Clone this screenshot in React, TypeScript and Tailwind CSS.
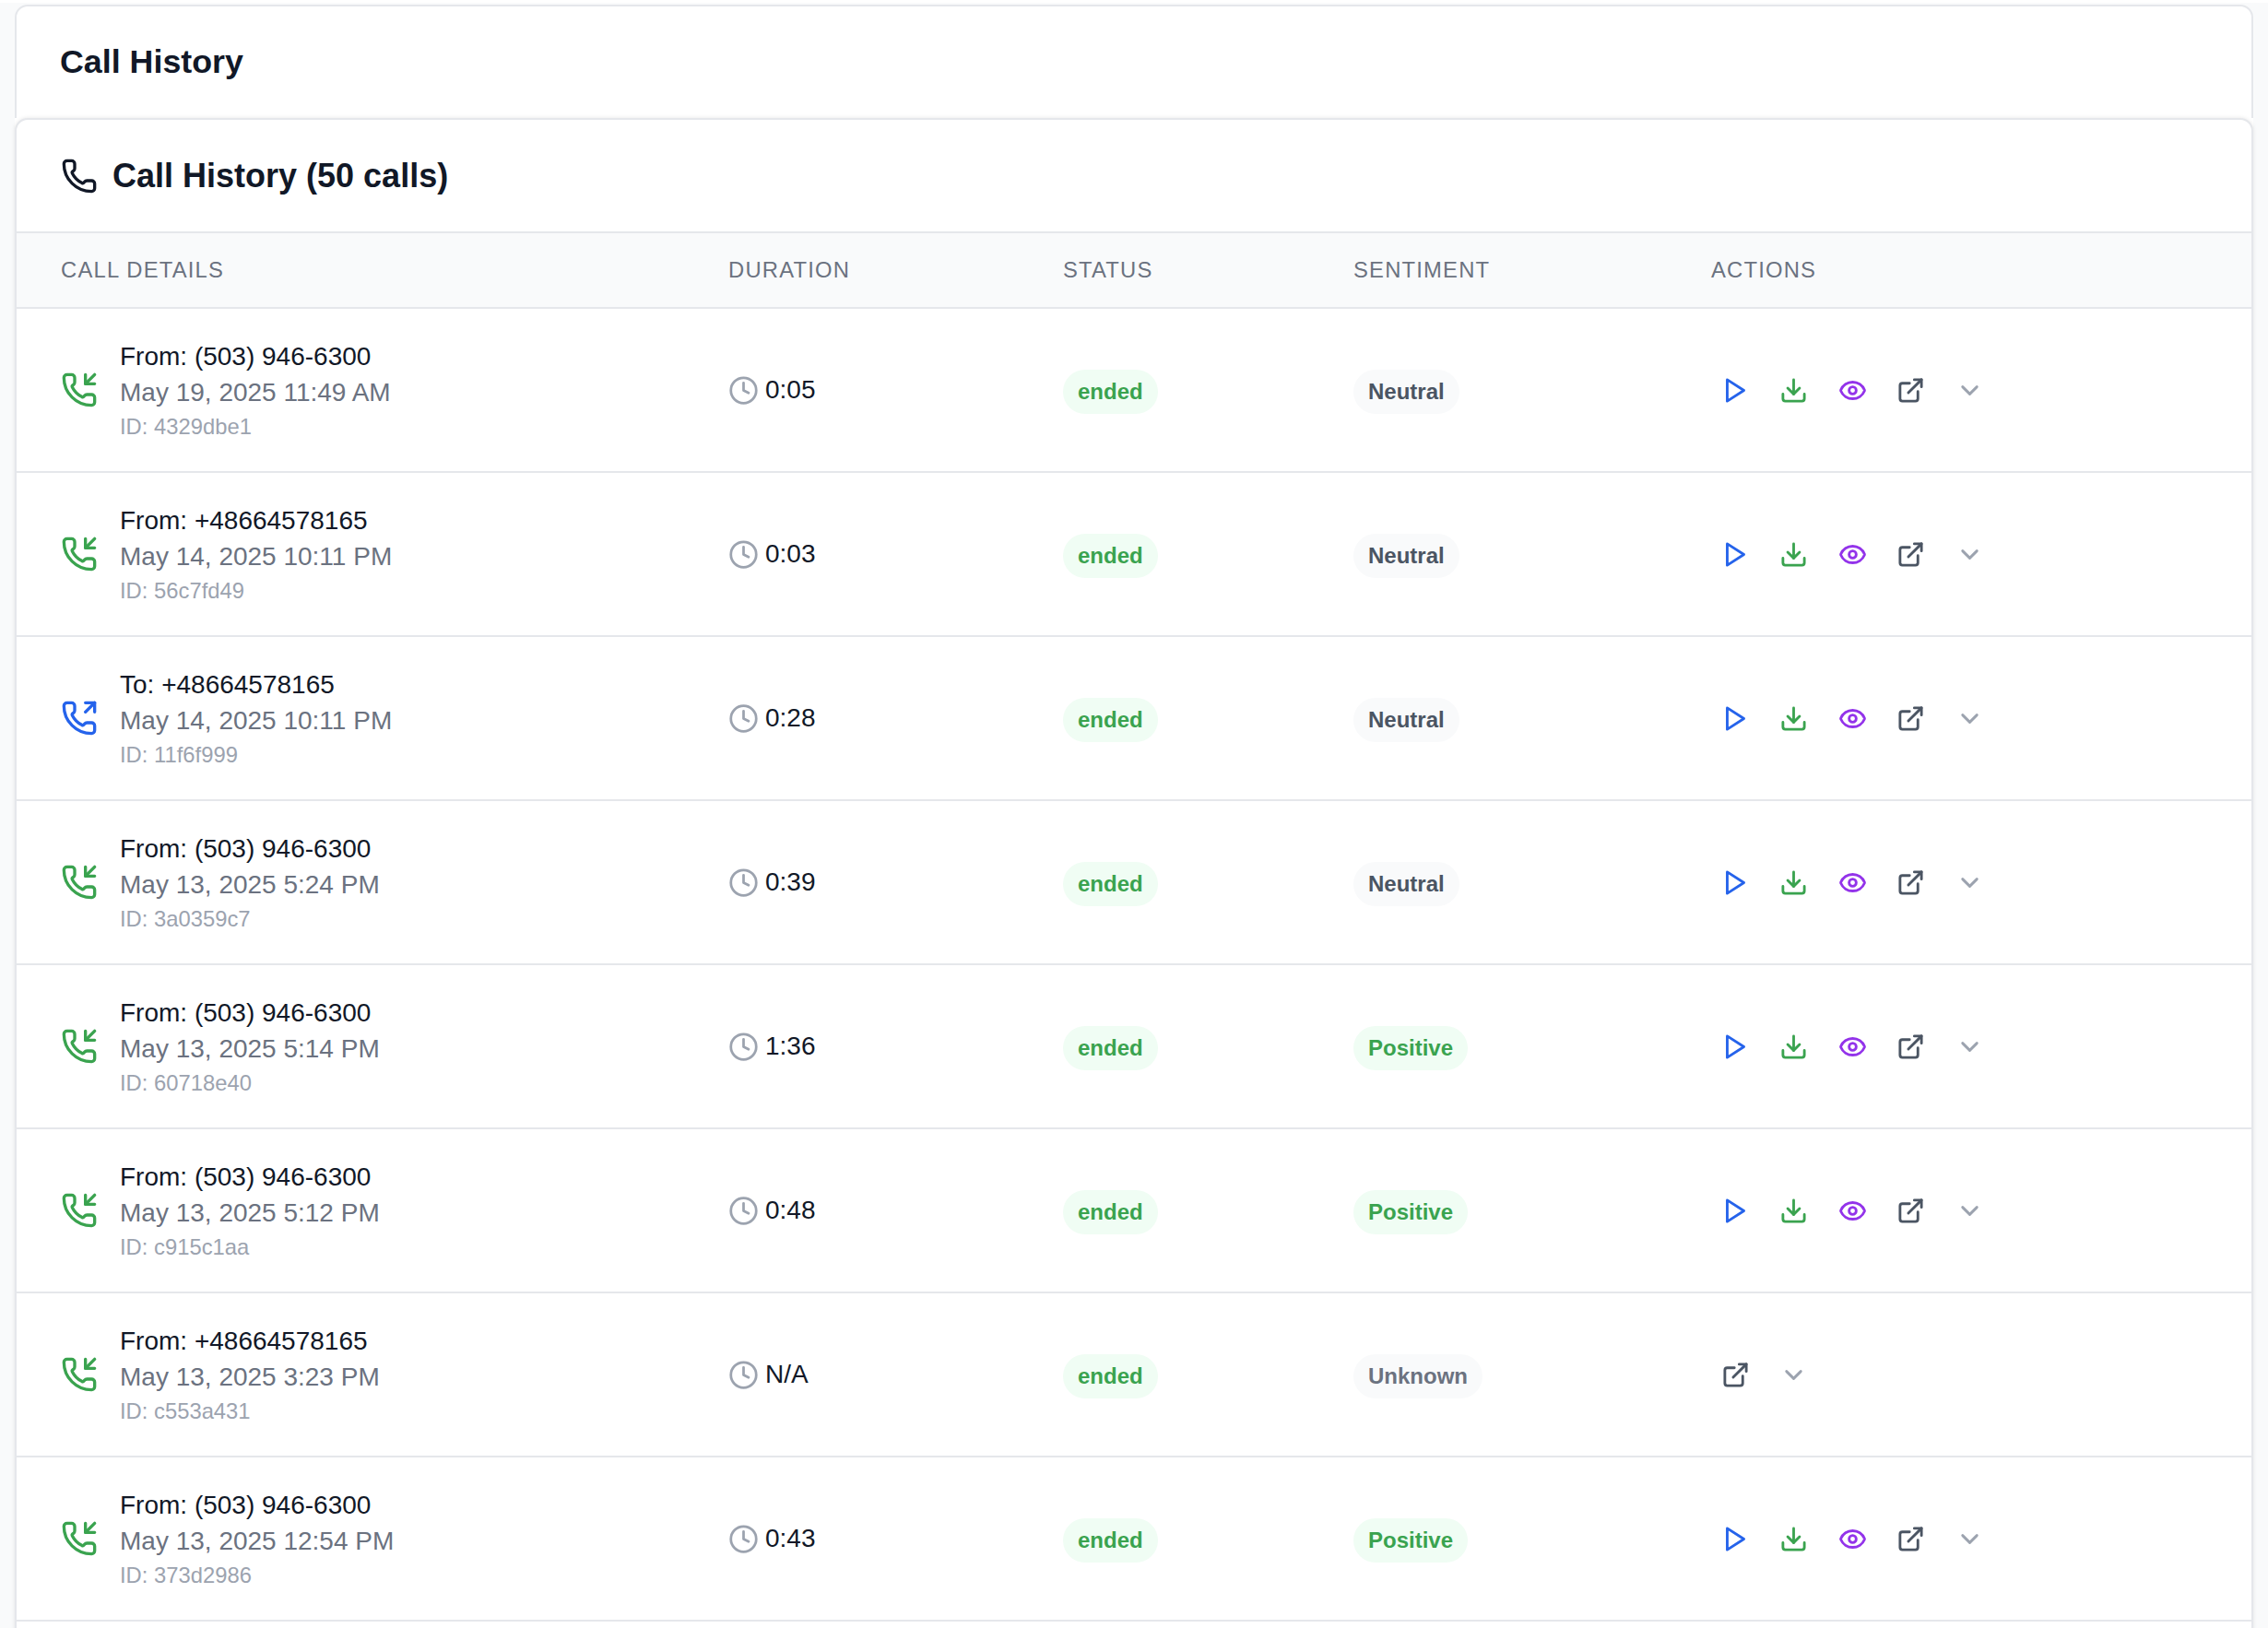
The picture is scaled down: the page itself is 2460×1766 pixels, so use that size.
import { ChevronDown, Clock, Download, ExternalLink, Eye, Phone, PhoneIncoming, PhoneOutgoing } from "lucide-react";

const calls = [
  { dir: "in", number: "(503) 946-6300", date: "May 19, 2025 11:49 AM", id: "4329dbe1", duration: "0:05", sentiment: "Neutral" },
  { dir: "in", number: "+48664578165", date: "May 14, 2025 10:11 PM", id: "56c7fd49", duration: "0:03", sentiment: "Neutral" },
  { dir: "out", number: "+48664578165", date: "May 14, 2025 10:11 PM", id: "11f6f999", duration: "0:28", sentiment: "Neutral" },
  { dir: "in", number: "(503) 946-6300", date: "May 13, 2025 5:24 PM", id: "3a0359c7", duration: "0:39", sentiment: "Neutral" },
  { dir: "in", number: "(503) 946-6300", date: "May 13, 2025 5:14 PM", id: "60718e40", duration: "1:36", sentiment: "Positive" },
  { dir: "in", number: "(503) 946-6300", date: "May 13, 2025 5:12 PM", id: "c915c1aa", duration: "0:48", sentiment: "Positive" },
  { dir: "in", number: "+48664578165", date: "May 13, 2025 3:23 PM", id: "c553a431", duration: "N/A", sentiment: "Unknown" },
  { dir: "in", number: "(503) 946-6300", date: "May 13, 2025 12:54 PM", id: "373d2986", duration: "0:43", sentiment: "Positive" },
];

const sentimentStyles: Record<string, string> = {
  Neutral: "bg-[#f9fafb] text-[#4b5563]",
  Positive: "bg-[#f0fdf4] text-[#3aa34f]",
  Unknown: "bg-[#f9fafb] text-[#6b7280]",
};

const gridCols = "grid grid-cols-[724px_363px_315px_388px_1fr] items-center";

const ActionButton = ({ children }: { children: React.ReactNode }) => (
  <button className="flex h-[56px] w-[56px] items-center justify-center">{children}</button>
);

const App = () => {
  return (
    <div className="h-screen overflow-hidden bg-white pt-[3px] font-['Liberation_Sans',sans-serif] text-[#111827]">
      <div className="h-full bg-[#f9fafb] pt-[2px]">
        <div className="mx-[16px] flex h-[125px] items-center rounded-t-[14px] border-2 border-[#e5e7eb] bg-white px-[47px]">
          <h1 className="text-[35.8px] font-bold">Call History</h1>
        </div>

        <div className="mx-[16px] h-full bg-white">
          <div className="-mt-[2px] h-full rounded-t-[14px] border-2 border-[#e5e7eb] bg-white shadow-[0_0_4px_rgba(0,0,0,0.1)]">
            <div className="flex h-[123px] items-center gap-[16px] border-b-2 border-[#e5e7eb] px-[48px]">
              <Phone size={40} strokeWidth={2} className="text-[#111827]" />
              <h2 className="text-[36px] font-bold">Call History (50 calls)</h2>
            </div>

            <div className={`${gridCols} h-[82px] border-b-2 border-[#e5e7eb] bg-[#f9fafb] pl-[48px] text-[23.8px] tracking-[1.2px] text-[#6b7280]`}>
              <div>CALL DETAILS</div>
              <div>DURATION</div>
              <div>STATUS</div>
              <div>SENTIMENT</div>
              <div>ACTIONS</div>
            </div>

            {calls.map((call) => (
              <div key={call.id} className={`${gridCols} h-[178px] border-b-2 border-[#e5e7eb] pl-[48px]`}>
                <div className="flex items-center gap-[24px]">
                  {call.dir === "in" ? (
                    <PhoneIncoming size={40} strokeWidth={2} className="text-[#3aa34f]" />
                  ) : (
                    <PhoneOutgoing size={40} strokeWidth={2} className="text-[#2563eb]" />
                  )}
                  <div className="flex flex-col">
                    <div className="text-[28px] leading-[39px]">
                      {call.dir === "in" ? "From: " : "To: "}
                      {call.number}
                    </div>
                    <div className="text-[28px] leading-[40px] text-[#6b7280]">{call.date}</div>
                    <div className="text-[23.8px] leading-[34px] text-[#9ca3af]">ID: {call.id}</div>
                  </div>
                </div>

                <div className="flex items-center gap-[7px]">
                  <Clock size={33} strokeWidth={2} className="text-[#9ca3af]" />
                  <span className="text-[28px]">{call.duration}</span>
                </div>

                <div className="pt-[3px]">
                  <span className="inline-flex h-[48px] items-center rounded-full bg-[#f0fdf4] px-[16px] text-[24px] font-bold text-[#3aa34f]">
                    ended
                  </span>
                </div>

                <div className="pt-[3px]">
                  <span className={`inline-flex h-[48px] items-center rounded-full px-[16px] text-[24px] font-bold ${sentimentStyles[call.sentiment]}`}>
                    {call.sentiment}
                  </span>
                </div>

                <div className="-ml-[2px] flex items-center gap-[7.6px]">
                  {call.duration !== "N/A" && (
                    <>
                      <ActionButton>
                        <svg width="31" height="31" viewBox="0 0 24 24" fill="none" stroke="#2563eb" strokeWidth="2.2" strokeLinecap="round" strokeLinejoin="round">
                          <polygon points="5 3 19 12 5 21 5 3" />
                        </svg>
                      </ActionButton>
                      <ActionButton>
                        <Download size={31} strokeWidth={2.2} className="text-[#3aa34f]" />
                      </ActionButton>
                      <ActionButton>
                        <Eye size={31} strokeWidth={2.2} className="text-[#9333ea]" />
                      </ActionButton>
                    </>
                  )}
                  <ActionButton>
                    <ExternalLink size={31} strokeWidth={2.2} className="text-[#4b5563]" />
                  </ActionButton>
                  <ActionButton>
                    <ChevronDown size={31} strokeWidth={2.2} className="text-[#9ca3af]" />
                  </ActionButton>
                </div>
              </div>
            ))}
          </div>
        </div>
      </div>
    </div>
  );
};

export default App;
